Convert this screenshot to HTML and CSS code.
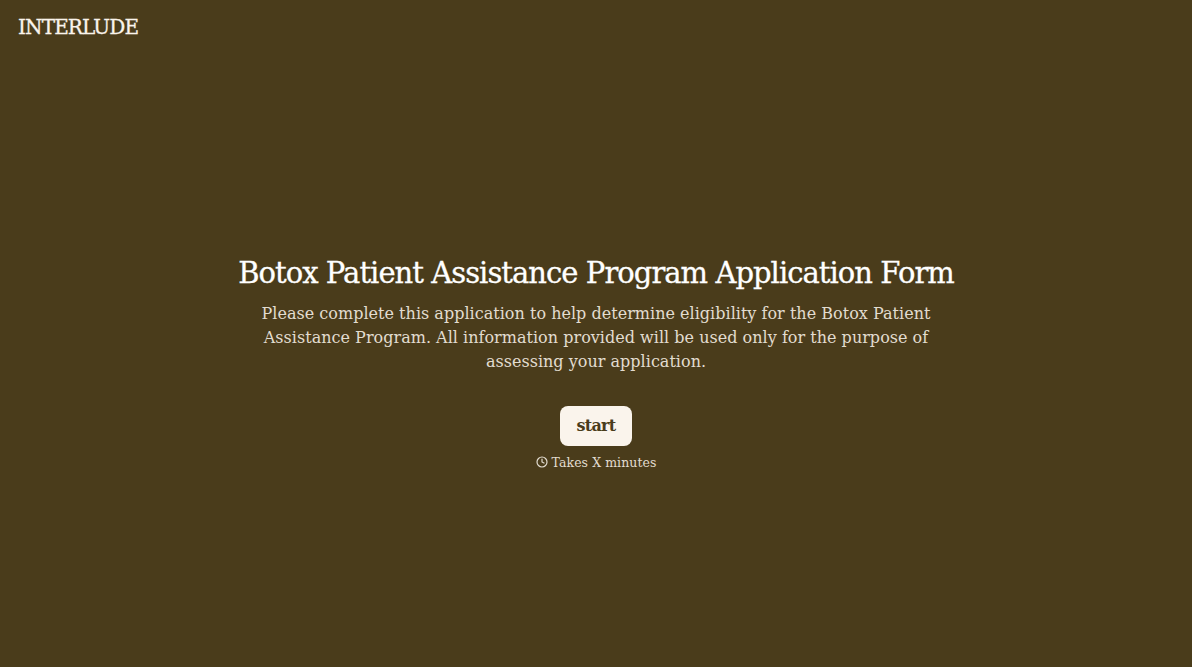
FILE: index.html
```html
<!DOCTYPE html>
<html lang="en">
<head>
    <meta charset="UTF-8">
    <meta name="viewport" content="width=device-width, initial-scale=1.0">
    <title>Interlude</title>
    <link rel="stylesheet" href="styles.css">
</head>
<body>
    <header class="topbar">
        <div class="logo">INTERLUDE</div>
    </header>

    <main class="intro">
        <h1 class="title">Botox Patient Assistance Program Application Form</h1>
        <p class="lead">Please complete this application to help determine eligibility for the Botox Patient Assistance Program. All information provided will be used only for the purpose of assessing your application.</p>
        <button class="btn-start">start</button>
        <div class="duration">
            <svg class="clock" viewBox="0 0 24 24" width="12" height="12" fill="none" stroke="currentColor" stroke-width="2.4" stroke-linecap="round" stroke-linejoin="round">
                <circle cx="12" cy="12" r="10"></circle>
                <path d="M12 6v6l4 2"></path>
            </svg>
            <span>Takes X minutes</span>
        </div>
    </main>
</body>
</html>
```

FILE: styles.css
```css
* {
    box-sizing: border-box;
}
body {
    background-color: #4a3c1b;
    margin: 0;
    height: 100vh;
    display: flex;
    flex-direction: column;
    font-family: "DejaVu Serif", "Liberation Serif", serif;
}
.topbar {
    padding: 14px 18px 0;
    height: 41px;
}
.logo {
    color: #faf4ec;
    font-size: 20px;
    line-height: 26px;
    letter-spacing: -0.87px;
    -webkit-text-stroke: 0.3px #faf4ec;
}

/* Centered intro */
.intro {
    display: flex;
    flex-direction: column;
    align-items: center;
    padding-top: 210px;
}
.title {
    margin: 0;
    color: #fff;
    font-size: 29px;
    font-weight: 400;
    line-height: 44px;
    letter-spacing: -0.96px;
    white-space: nowrap;
    -webkit-text-stroke: 0.3px #fff;
}
.lead {
    margin: 7px 0 0;
    width: 690px;
    color: #e2dcd0;
    font-size: 16px;
    line-height: 24px;
    letter-spacing: 0.02px;
    text-align: center;
}
.btn-start {
    margin-top: 32px;
    width: 72px;
    height: 40px;
    padding: 0 0 2px;
    border: none;
    border-radius: 8px;
    background: #faf4ec;
    color: #4a3c1b;
    font-family: inherit;
    font-size: 16px;
    font-weight: 700;
    letter-spacing: -0.75px;
    cursor: pointer;
}
.duration {
    margin-top: 8px;
    display: flex;
    align-items: center;
    gap: 4px;
    color: #e2dcd0;
    font-size: 12.5px;
    line-height: 18px;
    letter-spacing: 0.07px;
}
.clock {
    margin-bottom: 3px;
}
```
